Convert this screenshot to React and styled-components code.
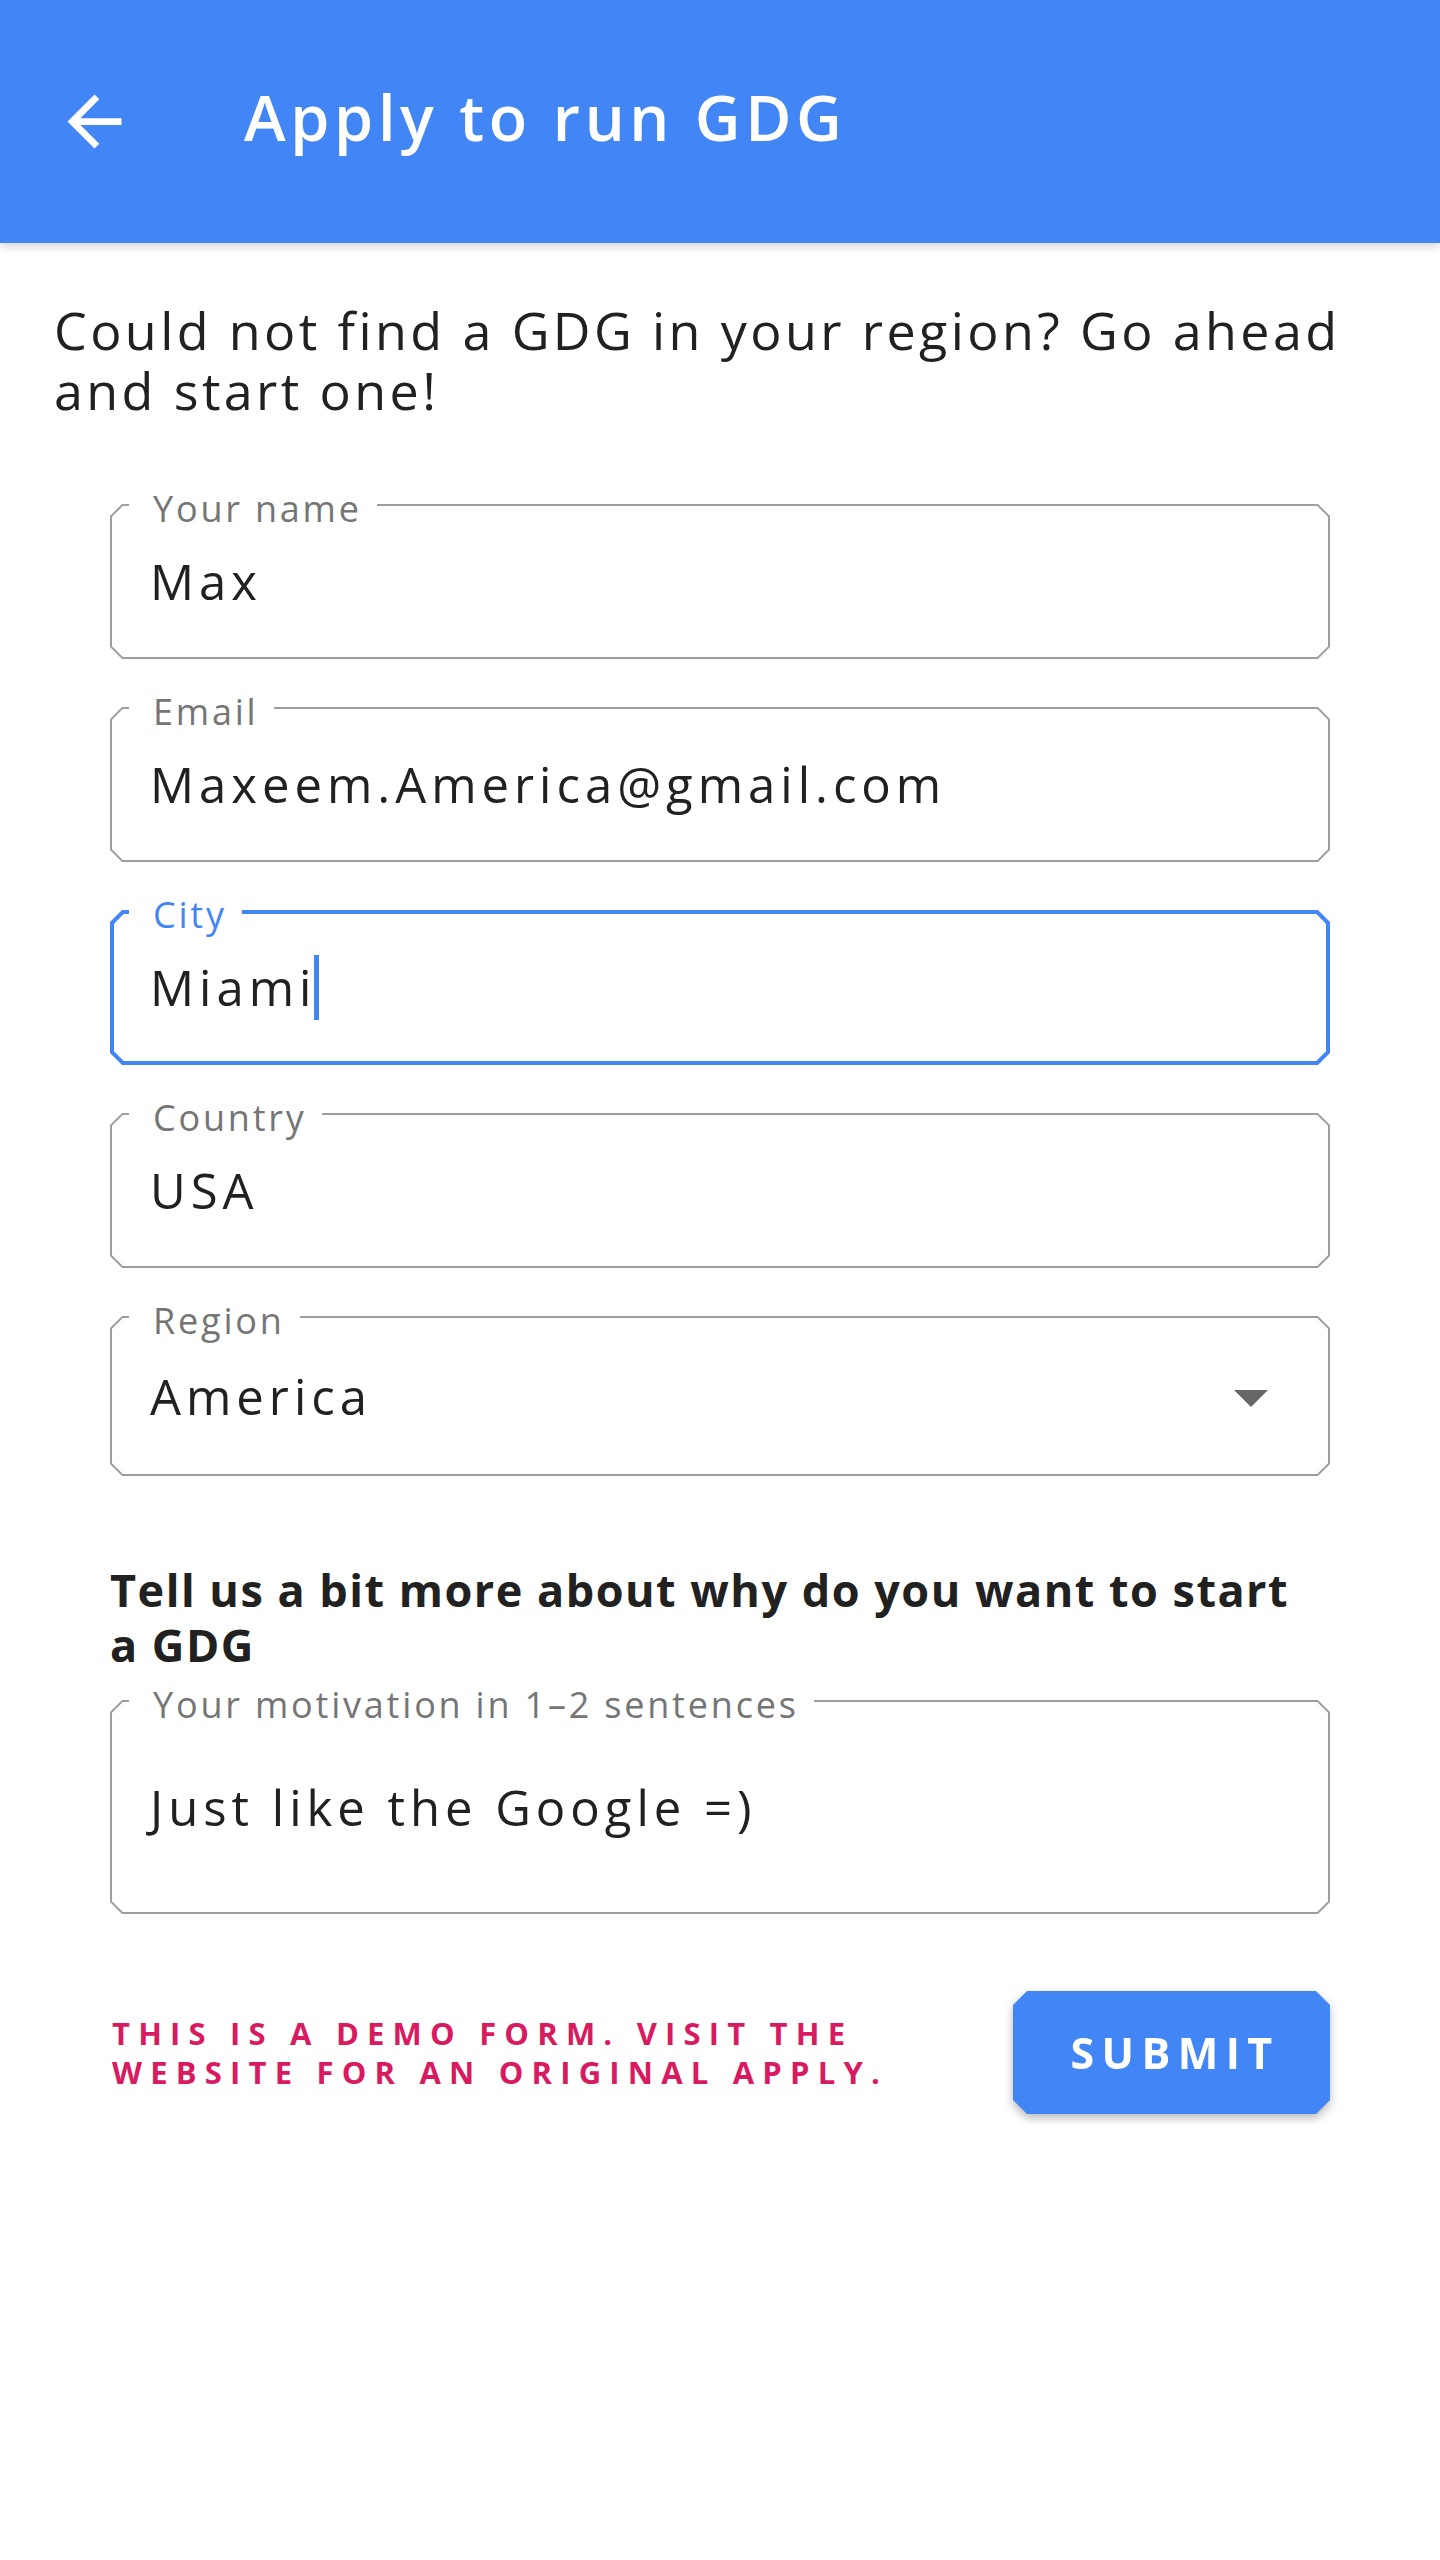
import React from "react";
import styled, { createGlobalStyle } from "styled-components";

const BLUE = "#4285f4";
const TEXT = "#212121";
const LABEL = "#757575";
const BORDER = "#9e9e9e";
const PINK = "#d81b60";

const chamfer = (c) => `polygon(${c}px 0, calc(100% - ${c}px) 0, 100% ${c}px, 100% calc(100% - ${c}px), calc(100% - ${c}px) 100%, ${c}px 100%, 0 calc(100% - ${c}px), 0 ${c}px)`;

const Global = createGlobalStyle`
  html, body { margin: 0; padding: 0; background: #fff; }
  body { font-family: "Open Sans", "Noto Sans", sans-serif; -webkit-font-smoothing: antialiased; }
  * { box-sizing: border-box; }
`;

const Page = styled.div`
  width: 1440px;
  min-height: 2560px;
  background: #fff;
`;

const Header = styled.header`
  position: relative;
  z-index: 1;
  height: 243px;
  background: ${BLUE};
  display: flex;
  align-items: center;
  padding-left: 54px;
  box-shadow: 0 3px 10px rgba(0, 0, 0, 0.18);
`;

const BackButton = styled.button`
  width: 81px;
  height: 81px;
  padding: 0;
  border: 0;
  background: transparent;
  display: flex;
  align-items: center;
  justify-content: center;
  cursor: pointer;
  svg { width: 81px; height: 81px; display: block; }
`;

const Title = styled.h1`
  margin: 0 0 10px 109px;
  font: 600 63px/63px "Open Sans", sans-serif;
  letter-spacing: 4.6px;
  color: #fff;
`;

const Main = styled.main`
  padding: 57px 54px 0;
`;

const Intro = styled.p`
  margin: 0;
  font: 400 52px/60px "Open Sans", sans-serif;
  letter-spacing: 3.4px;
  color: ${TEXT};
`;

const Form = styled.form`
  margin: 84px 110px 0;
  display: flex;
  flex-direction: column;
`;

const FieldList = styled.div`
  display: flex;
  flex-direction: column;
  gap: 48px;
`;

const Field = styled.div`
  position: relative;
  height: ${(p) => p.$h}px;
`;

const Frame = styled.div`
  height: 100%;
  padding: ${(p) => (p.$focused ? 4 : 2)}px;
  background: ${(p) => (p.$focused ? BLUE : BORDER)};
  clip-path: ${chamfer(12)};
`;

const Inner = styled.div`
  height: 100%;
  background: #fff;
  display: flex;
  align-items: center;
  padding-left: ${(p) => 40 - (p.$focused ? 4 : 2)}px;
  padding-right: ${(p) => 62 - (p.$focused ? 4 : 2)}px;
  clip-path: ${(p) => chamfer(p.$focused ? 9.7 : 10.8)};
`;

const Label = styled.span`
  position: absolute;
  top: -13px;
  left: 19px;
  padding: 0 15px 0 24px;
  background: #fff;
  font: 400 36px/36px "Open Sans", sans-serif;
  letter-spacing: 2.8px;
  color: ${(p) => (p.$focused ? BLUE : LABEL)};
  white-space: nowrap;
`;

const Value = styled.span`
  font: 400 49px/1.2 "Open Sans", sans-serif;
  letter-spacing: 5px;
  color: ${TEXT};
  white-space: nowrap;
`;

const Caret = styled.span`
  width: 5px;
  height: 65px;
  margin-left: -2px;
  background: ${BLUE};
`;

const SelectArrow = styled.span`
  margin-left: auto;
  margin-top: 5px;
  width: 0;
  height: 0;
  border-left: 17px solid transparent;
  border-right: 17px solid transparent;
  border-top: 17px solid #666;
`;

const Heading = styled.h2`
  margin: 86px 0 28px;
  max-width: 1200px;
  font: 700 45px/55px "Open Sans", sans-serif;
  letter-spacing: 1.5px;
  color: ${TEXT};
`;

const Actions = styled.div`
  margin-top: 77px;
  display: flex;
  align-items: center;
  justify-content: space-between;
`;

const Notice = styled.p`
  margin: 0 0 0 2px;
  max-width: 820px;
  font: 700 31px/39px "Open Sans", sans-serif;
  letter-spacing: 8.2px;
  text-transform: uppercase;
  color: ${PINK};
`;

const ButtonShadow = styled.div`
  filter: drop-shadow(0 4px 5px rgba(0, 0, 0, 0.28));
`;

const SubmitButton = styled.button`
  width: 317px;
  height: 123px;
  border: 0;
  padding: 0 0 0 7px;
  background: ${BLUE};
  color: #fff;
  font: 700 43px/1 "Open Sans", sans-serif;
  letter-spacing: 7.4px;
  text-transform: uppercase;
  clip-path: ${chamfer(14)};
  cursor: pointer;
`;

function TextField({ label, value, focused, select, height = 155 }) {
  return (
    <Field $h={height}>
      <Frame $focused={focused}>
        <Inner $focused={focused}>
          <Value>{value}</Value>
          {focused && <Caret />}
          {select && <SelectArrow />}
        </Inner>
      </Frame>
      <Label $focused={focused}>{label}</Label>
    </Field>
  );
}

export default function App() {
  return (
    <Page>
      <Global />
      <Header>
        <BackButton aria-label="Back">
          <svg viewBox="0 0 24 24">
            <path fill="#fff" d="M20 11H7.83l5.59-5.59L12 4l-8 8 8 8 1.41-1.41L7.83 13H20v-2z" />
          </svg>
        </BackButton>
        <Title>Apply to run GDG</Title>
      </Header>
      <Main>
        <Intro>Could not find a GDG in your region? Go ahead and start one!</Intro>
      </Main>
      <Form onSubmit={(e) => e.preventDefault()}>
        <FieldList>
          <TextField label="Your name" value="Max" />
          <TextField label="Email" value="Maxeem.America@gmail.com" />
          <TextField label="City" value="Miami" focused />
          <TextField label="Country" value="USA" />
          <TextField label="Region" value="America" select height={160} />
        </FieldList>
        <Heading>Tell us a bit more about why do you want to start a GDG</Heading>
        <TextField label="Your motivation in 1–2 sentences" value="Just like the Google =)" height={214} />
        <Actions>
          <Notice>This is a demo form. Visit the website for an original apply.</Notice>
          <ButtonShadow>
            <SubmitButton type="submit">Submit</SubmitButton>
          </ButtonShadow>
        </Actions>
      </Form>
    </Page>
  );
}
